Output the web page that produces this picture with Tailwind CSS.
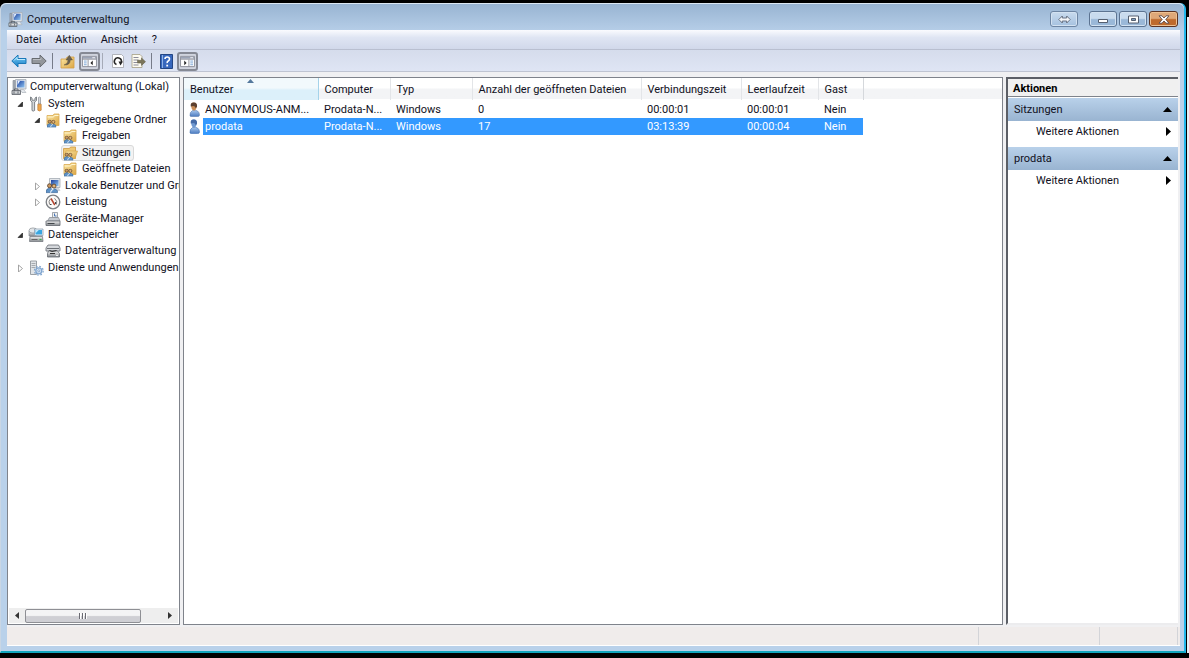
<!DOCTYPE html>
<html lang="de">
<head>
<meta charset="utf-8">
<title>Computerverwaltung</title>
<script src="https://cdn.jsdelivr.net/npm/@tailwindcss/browser@4"></script>
</head>
<body class="h-screen overflow-hidden bg-black font-[Roboto,'Noto_Sans',sans-serif] text-[11px] leading-4 text-[#111122]">

<!-- Shared icon symbols -->
<svg class="absolute size-0">
  <defs>
    <linearGradient id="gFolder" x1="0" y1="0" x2="1" y2="1"><stop offset="0" stop-color="#fbe7a4"/><stop offset="1" stop-color="#dca747"/></linearGradient>
    <linearGradient id="gScreen" x1="0" y1="0" x2="1" y2="1"><stop offset="0" stop-color="#1c3f9c"/><stop offset="1" stop-color="#8fc4f2"/></linearGradient>
    <linearGradient id="gMetal" x1="0" y1="0" x2="0" y2="1"><stop offset="0" stop-color="#f4f4f4"/><stop offset="1" stop-color="#85898e"/></linearGradient>
    <linearGradient id="gUser" x1="0" y1="0" x2="0" y2="1"><stop offset="0" stop-color="#a9c8ee"/><stop offset="1" stop-color="#4d7cc0"/></linearGradient>
    <linearGradient id="gBlue" x1="0" y1="0" x2="0" y2="1"><stop offset="0" stop-color="#7fd3f8"/><stop offset="1" stop-color="#1479c4"/></linearGradient>
    <symbol id="computer" viewBox="0 0 16 16">
      <path d="M4.500.5h10.500v9.500H4.500z" fill="#e3e7ed" stroke="#a4abb4" stroke-width=".8"/>
      <path d="M6 1.800h7.500v6.700H6z" fill="url(#gScreen)"/>
      <path d="M6.500 2h2.500L6.500 6z" fill="#e8f3ff"/>
      <path d="M2 1.500h2v9.500H2z" fill="#a9b0ba" stroke="#7c838c" stroke-width=".6"/>
      <path d="M9 10.500h3.500L15 13.500h-4z" fill="#e4e8ed" stroke="#a4abb4" stroke-width=".6"/>
      <path d="M1 11.500h8.500v4H1z" fill="#aeb3b9" stroke="#5c6168" stroke-width=".8"/>
      <path d="M3.500 11.500V10H7v1.500" fill="none" stroke="#4f545a" stroke-width=".8"/>
      <path d="M1.500 13.200h7.500" stroke="#f0f0f0" stroke-width=".8"/>
      <path d="M3 12.500v2M7 12.500v2" stroke="#4f545a" stroke-width=".8"/>
    </symbol>
    <symbol id="tools" viewBox="0 0 16 16">
      <path d="M2.500 1v3.500l1.500 1.500v8.500q1.200 1.200 2.600 0V6L8.500 4.500V1L7 2v2.200H4V2z" fill="#d4d7da" stroke="#73787e" stroke-width=".9"/>
      <path d="M10.500 1.500q1-1 2 0V8h-2z" fill="#d5d8dc" stroke="#7b8086" stroke-width=".6"/>
      <path d="M9.800 8.200h3.400v6q-1.700 1.600-3.400 0z" fill="#efa64c" stroke="#b0702a" stroke-width=".6"/>
    </symbol>
    <symbol id="people" viewBox="0 0 12 10">
      <circle cx="3.500" cy="2.500" r="2" fill="#c99a62" stroke="#573a25" stroke-width=".8"/>
      <circle cx="8" cy="2.800" r="2" fill="#e0b478" stroke="#573a25" stroke-width=".8"/>
      <path d="M0 9q0-4 3.500-4 2 0 2.700 1.200Q9 4.300 11.500 7.500V9.500H0z" fill="#5f93c8" stroke="#2d5380" stroke-width=".5"/>
      <path d="M4.500 9.500q.500-3 3-3.500" fill="none" stroke="#e3effa" stroke-width="1.100"/>
    </symbol>
    <symbol id="folder" viewBox="0 0 16 16">
      <path d="M2 3.500h6l1-1.500h5v11.500H2z" fill="url(#gFolder)" stroke="#d9aa50" stroke-width=".8"/>
      <path d="M2.500 5h6l1-1.500H13.500" stroke="#fff5ce" fill="none"/>
      <use href="#people" x="2" y="7.500" width="9.500" height="8.200"/>
    </symbol>
    <symbol id="folderOpen" viewBox="0 0 16 16">
      <path d="M1.500 3.500H7.500l1-1.500h5v11.500h-12z" fill="#efc873" stroke="#cf9a42" stroke-width=".8"/>
      <path d="M4 6h11.500L13 13.500H2z" fill="url(#gFolder)" stroke="#d9aa50" stroke-width=".7"/>
      <use href="#people" x="2" y="7.500" width="9.500" height="8.200"/>
    </symbol>
    <symbol id="localusers" viewBox="0 0 16 16">
      <path d="M4.500.5h10.500v9h-10.500z" fill="#e3e6ea" stroke="#a4abb4" stroke-width=".8"/>
      <path d="M6 2h7.500v6H6z" fill="url(#gScreen)"/>
      <path d="M10 10h4l1.500 3H10z" fill="#cfd4da"/>
      <use href="#people" x="1" y="5" width="12" height="10.500"/>
    </symbol>
    <symbol id="gauge" viewBox="0 0 16 16">
      <circle cx="8" cy="8" r="6.800" fill="#fcfaf8" stroke="#7b7f84" stroke-width="1.300"/>
      <path d="M4.500 10.500Q3.200 7 5.500 4.800M11.500 10.500Q12.800 7 9.500 4.300" stroke="#777" fill="none" stroke-width=".9"/>
      <path d="M6 4.500 9.800 11" stroke="#b5452f" stroke-width="1.500"/>
      <path d="M5 10.500h1.500M10.500 8v2" stroke="#444"/>
    </symbol>
    <symbol id="device" viewBox="0 0 16 16">
      <path d="M7.500 1.500h5v5h-5z" fill="#f0f0f0" stroke="#8c9299" stroke-width=".8"/>
      <path d="M4.500 6.500h9l1.500 3.500H2.500z" fill="#c6cad0" stroke="#858a91" stroke-width=".7"/>
      <path d="M1 10h14v4.500H1z" fill="url(#gMetal)" stroke="#63686e" stroke-width=".8"/>
      <path d="M2.500 12.500h7" stroke="#43474b"/><path d="M9.500 2.500v2.500h2" stroke="#4a78b8" fill="none"/>
    </symbol>
    <symbol id="storage" viewBox="0 0 16 16">
      <path d="M1 4v5h7V4z" fill="url(#gMetal)" stroke="#8b9096" stroke-width=".7"/>
      <ellipse cx="5" cy="3.500" rx="4" ry="2.600" fill="#e2e5e8" stroke="#8b9096" stroke-width=".7"/>
      <path d="M6.500 2h8.500v6.500H6.500z" fill="#eaf3fa" stroke="#8295a8" stroke-width=".7"/>
      <path d="M7.500 3h6.500v4.500H7.500z" fill="#39a6e0"/><path d="M7.800 3h3L7.800 6z" fill="#bfe8fb"/>
      <path d="M2 9.500h12.500l.5 5H1.500z" fill="url(#gMetal)" stroke="#767b81" stroke-width=".8"/>
      <path d="M3.500 12.500h6" stroke="#666"/><path d="M11.500 12.500h2" stroke="#32b24a" stroke-width="1.200"/>
    </symbol>
    <symbol id="disk" viewBox="0 0 16 16">
      <path d="M3 2h10.500L15 5v3H1V5z" fill="#d5d8dc" stroke="#74797f" stroke-width=".9"/>
      <path d="M2 5.500h12" stroke="#6c7177"/>
      <path d="M3.500 8h9l2 2.500V14h-12v-3.500z" fill="url(#gMetal)" stroke="#63686e" stroke-width=".8"/>
      <path d="M4.500 7.500 7 8.500l4.500-1M5 10.500h5" stroke="#333" fill="none"/><path d="M11 12.500h2" stroke="#eee"/>
    </symbol>
    <symbol id="services" viewBox="0 0 16 16">
      <path d="M2.500 1h6v13.500h-6z" fill="#e1e4e7" stroke="#92979d" stroke-width=".9"/>
      <path d="M3.500 3.500h4M3.500 5.500h4M3.500 7.500h4" stroke="#969ba1" stroke-width=".8"/>
      <circle cx="10.800" cy="10.800" r="3" fill="#d5e4f4" stroke="#82a6cf" stroke-width="1.300"/>
      <circle cx="10.800" cy="10.800" r="4.400" fill="none" stroke="#82a6cf" stroke-width="1.200" stroke-dasharray="1.700 1.750"/>
      <circle cx="10.800" cy="10.800" r="1" fill="#fff" stroke="#5b85b6" stroke-width=".6"/>
    </symbol>
    <symbol id="expanded" viewBox="0 0 8 8"><path d="M6.500 2v4.500H2z" fill="#333" stroke="#111" stroke-width=".6"/></symbol>
    <symbol id="collapsed" viewBox="0 0 8 8"><path d="M2.500 1 6.500 4.500 2.500 8z" fill="#fff" stroke="#9b9b9b" stroke-width=".9"/></symbol>
    <symbol id="panel" viewBox="0 0 16 14">
      <path d="M.5 1.500h15v11H.5z" fill="#fff" stroke="#8a8e98"/><path d="M1 2h14v2H1z" fill="#9aa3b5"/>
      <path d="M11 3h3" stroke="#fff"/><path d="M.5 4.500h15" stroke="#8a8e98"/>
    </symbol>
  </defs>
</svg>

<div class="flex h-full pb-[5px] pt-[3px]">
<main class="flex min-w-0 flex-1 flex-col rounded-t-md border-b-2 border-l border-r-2 border-b-[#12a5bd] border-l-[#c9d6e4] border-r-[#22b6ea] bg-[#b9d1ea] pl-[6px] pr-[4px]">

  <!-- Title bar -->
  <header class="-ml-[6px] -mr-[4px] flex h-[27px] shrink-0 items-center rounded-t-md border-t border-[#dbe7f3] bg-linear-to-b from-[#98b4d2] to-[#b5cde7] pl-[7px] pr-[6px]">
    <svg class="mt-1 size-[15px]"><use href="#computer"/></svg>
    <h1 class="ml-1 mt-[6px] flex-1">Computerverwaltung</h1>
    <div class="mt-1 flex">
      <button aria-label="Verschieben" class="mr-[11px] flex h-4 w-7 items-center justify-center rounded-[3px] border border-[#6d85a3] bg-linear-to-b from-[#c9dbee] to-[#a5c1df] shadow-[inset_0_0_0_1px_#d3e2f1]">
        <svg class="h-[9px] w-[13px]" viewBox="0 0 13 9"><path d="M.8 4.500 4.300 1v2h4.400V1l3.500 3.500L8.700 8V6H4.300v2z" fill="#f4f6f9" stroke="#5e6878" stroke-width=".9"/></svg>
      </button>
      <button aria-label="Minimieren" class="mr-[2px] flex h-4 w-7 items-center justify-center rounded-[3px] border border-[#5c7391] bg-linear-to-b from-[#c9dbee] from-45% to-[#9ab8d8] to-55% shadow-[inset_0_0_0_1px_#d3e2f1]">
        <svg class="h-[9px] w-[12px]" viewBox="0 0 12 9"><path d="M1.500 4.500h9v3h-9z" fill="#fff" stroke="#545f70"/></svg>
      </button>
      <button aria-label="Maximieren" class="mr-[2px] flex h-4 w-7 items-center justify-center rounded-[3px] border border-[#5c7391] bg-linear-to-b from-[#c9dbee] from-45% to-[#9ab8d8] to-55% shadow-[inset_0_0_0_1px_#d3e2f1]">
        <svg class="h-[9px] w-[11px]" viewBox="0 0 11 9"><path d="M.5 1h10v7H.5z" fill="#fff" stroke="#545f70"/><path d="M3.500 3.500h4v2h-4z" fill="#7f9fc2" stroke="#545f70"/></svg>
      </button>
      <button aria-label="Schließen" class="flex h-4 w-[29px] items-center justify-center rounded-[3px] border border-[#5b3323] bg-linear-to-b from-[#dfa878] from-45% to-[#be6a2c] to-55% shadow-[inset_0_0_0_1px_#edc193]">
        <svg class="h-[9px] w-[12px]" viewBox="0 0 12 9"><path d="M1 .8h3L6 3l2-2.200h3L7.800 4.500 11 8.200H8L6 6 4 8.200H1l3.200-3.700z" fill="#fff" stroke="#5b4a4a" stroke-width=".9"/></svg>
      </button>
    </div>
  </header>

  <!-- Menu -->
  <nav class="flex h-[20px] shrink-0 items-center gap-[14px] border-b border-[#b9bfd0] bg-linear-to-b from-[#fafbfe] via-[#dfe5f3] via-40% to-[#d1d8ea] pl-[9px] pt-px">
    <button>Datei</button><button>Aktion</button><button>Ansicht</button><button>?</button>
  </nav>

  <!-- Toolbar -->
  <div role="toolbar" aria-label="Werkzeuge" class="flex h-[22px] shrink-0 items-center border-b border-[#bfc4d2] bg-linear-to-b from-[#d5dcec] to-[#dfe5f4] pl-1 pt-px">
    <button aria-label="Zurück"><svg class="h-[14px] w-4" viewBox="0 0 16 14"><path d="M.8 7 7 1v3.500h8v5H7V13z" fill="url(#gBlue)" stroke="#1b78b8"/><path d="M3 6.500 6 3.500v2h8" fill="none" stroke="#bdeaff"/></svg></button>
    <button aria-label="Vorwärts" class="ml-1"><svg class="h-[14px] w-4" viewBox="0 0 16 14"><path d="M15.200 7 9 1v3.500H1v5h8V13z" fill="#93979c" stroke="#676b70"/><path d="M2 5.500h8v-2" fill="none" stroke="#babdc2"/></svg></button>
    <span class="mx-[5px] h-4 w-px bg-[#767b88]"></span>
    <button aria-label="Eine Ebene nach oben" class="ml-[2px]"><svg class="size-[15px]" viewBox="0 0 15 15"><path d="M1 5h5l1-2h7v11H1z" fill="url(#gFolder)" stroke="#d5a045" stroke-width=".8"/><path d="M4 11q4-1 4-5H6L9.300 1.200 12.500 6h-2.200q0 5.500-6.300 5z" fill="#6a6152" stroke="#4d463a" stroke-width=".4"/></svg></button>
    <button aria-label="Konsolenstruktur anzeigen" class="ml-[4px] flex h-[19px] w-[21px] items-center justify-center rounded-[3px] border-2 border-[#858994] bg-[#d0d4de]"><svg class="h-[13px] w-[15px]" viewBox="0 0 16 14"><use href="#panel"/><path d="M6.500 5v7.500" stroke="#8a8e98"/><path d="M2 6.500h3M2 8.500h3M2 10.500h3" stroke="#76a2d5"/><path d="M11.500 6v5L9 8.500z" fill="#222"/></svg></button>
    <span class="mx-[2px] h-4 w-px bg-[#a6abb8]"></span>
    <button aria-label="Aktualisieren" class="ml-[6px]"><svg class="size-[14px]" viewBox="0 0 14 14"><path d="M1.500.5h9l2 2v11h-11z" fill="#fff" stroke="#a2a5ab" stroke-width=".8"/><path d="M5.500 10.500A3.500 3.500 0 1 1 10.300 8" fill="none" stroke="#262626" stroke-width="1.600"/><path d="M7.500 7.500h4.500L9.500 11.500z" fill="#262626"/></svg></button>
    <button aria-label="Liste exportieren" class="ml-[6px]"><svg class="h-[14px] w-[15px]" viewBox="0 0 15 14"><path d="M1 .5h8l2 2v11H1z" fill="#fdfbf0" stroke="#a59e84" stroke-width=".8"/><path d="M2.500 3.500h5M2.500 6h5M2.500 8.500h4M2.500 11h5" stroke="#8b8b9a"/><path d="M6.500 6.300h4V4l4 3.700-4 3.700V9.100h-4z" fill="#7b755a" stroke="#5b563f" stroke-width=".5"/></svg></button>
    <span class="mx-[5px] h-4 w-px bg-[#767b88]"></span>
    <button aria-label="Hilfe" class="ml-[3px]"><svg class="h-[15px] w-[13px]" viewBox="0 0 13 15"><path d="M.5.500h12v14H.5z" fill="#3767bd" stroke="#234684"/><path d="M2.500 1v13" stroke="#8fb3e6"/><path d="M5 5q0-2 2.200-2t2.300 2q0 1.200-1.300 2t-1 2.200" fill="none" stroke="#fff" stroke-width="1.600"/><path d="M6.300 10.700h1.800v1.800H6.300z" fill="#fff"/></svg></button>
    <button aria-label="Aktionsbereich anzeigen" class="ml-1 flex h-[19px] w-[21px] items-center justify-center rounded-[3px] border-2 border-[#858994] bg-[#d0d4de]"><svg class="h-[13px] w-[15px]" viewBox="0 0 16 14"><use href="#panel"/><path d="M9.500 5v7.500" stroke="#8a8e98"/><path d="M11 6.500h3M11 8.500h3M11 10.500h3" stroke="#76a2d5"/><path d="M4.500 6v5L7 8.500z" fill="#222"/></svg></button>
  </div>

  <!-- Panes -->
  <div class="flex min-h-0 flex-1 gap-[3px] bg-[#f0f0f2] pb-[2px] pt-[5px]">

    <aside class="flex w-[173px] shrink-0 flex-col border border-[#7f838b] bg-white">
      <ul class="mt-px grid h-[197px] auto-rows-fr overflow-hidden whitespace-nowrap">
        <li class="flex items-center pl-[3px]"><svg class="size-4"><use href="#computer"/></svg><span class="ml-[3px]">Computerverwaltung (Lokal)</span></li>
        <li class="flex items-center pl-2"><svg class="mr-1 size-2"><use href="#expanded"/></svg><svg class="size-4"><use href="#tools"/></svg><span class="ml-[4px]">System</span></li>
        <li class="flex items-center pl-[25px]"><svg class="mr-1 size-2"><use href="#expanded"/></svg><svg class="size-4"><use href="#folder"/></svg><span class="ml-[4px]">Freigegebene Ordner</span></li>
        <li class="flex items-center pl-[54px]"><svg class="size-4"><use href="#folder"/></svg><span class="ml-[4px]">Freigaben</span></li>
        <li class="flex items-center pl-[53px]"><span class="flex h-full items-center rounded-[3px] border border-[#d9d9d9] bg-[#f3f3f3] pr-[2px]"><svg class="size-4"><use href="#folderOpen"/></svg><span class="ml-[4px]">Sitzungen</span></span></li>
        <li class="flex items-center pl-[54px]"><svg class="size-4"><use href="#folder"/></svg><span class="ml-[4px]">Geöffnete Dateien</span></li>
        <li class="flex items-center pl-[25px]"><svg class="mr-1 size-2 shrink-0"><use href="#collapsed"/></svg><svg class="size-4 shrink-0"><use href="#localusers"/></svg><span class="ml-[4px]">Lokale Benutzer und Gruppen</span></li>
        <li class="flex items-center pl-[25px]"><svg class="mr-1 size-2"><use href="#collapsed"/></svg><svg class="size-4"><use href="#gauge"/></svg><span class="ml-[4px]">Leistung</span></li>
        <li class="flex items-center pl-[37px]"><svg class="size-4"><use href="#device"/></svg><span class="ml-[4px]">Geräte-Manager</span></li>
        <li class="flex items-center pl-2"><svg class="mr-1 size-2"><use href="#expanded"/></svg><svg class="size-4"><use href="#storage"/></svg><span class="ml-[4px]">Datenspeicher</span></li>
        <li class="flex items-center pl-[37px]"><svg class="size-4 shrink-0"><use href="#disk"/></svg><span class="ml-[4px]">Datenträgerverwaltung</span></li>
        <li class="flex items-center pl-2"><svg class="mr-1 size-2 shrink-0"><use href="#collapsed"/></svg><svg class="size-4 shrink-0"><use href="#services"/></svg><span class="ml-[4px]">Dienste und Anwendungen</span></li>
      </ul>
      <div class="mx-px mb-px mt-auto flex h-[15px] items-center bg-[#eeeeee]">
        <button aria-label="Nach links" class="flex w-4 justify-center"><svg class="h-[7px] w-1" viewBox="0 0 4 7"><path d="M4 0v7L0 3.500z" fill="#333"/></svg></button>
        <div class="flex h-[14px] w-[116px] items-center justify-center gap-px rounded-[2px] border border-[#8e8f94] bg-linear-to-b from-[#f4f4f5] from-45% to-[#cfcfd4] to-55%">
          <i class="h-[6px] w-[2px] border-r border-white bg-[#6a6a72]"></i><i class="h-[6px] w-[2px] border-r border-white bg-[#6a6a72]"></i><i class="h-[6px] w-[2px] border-r border-white bg-[#6a6a72]"></i>
        </div>
        <button aria-label="Nach rechts" class="ml-auto flex w-4 justify-center"><svg class="h-[7px] w-1" viewBox="0 0 4 7"><path d="M0 0v7l4-3.500z" fill="#333"/></svg></button>
      </div>
    </aside>

    <section class="min-w-0 flex-1 border border-[#7f838b] bg-white">
      <div class="bg-linear-to-b from-white from-45% to-[#f3f4f6] to-55% bg-[length:100%_21px] bg-no-repeat">
      <table class="w-[679px] table-fixed border-collapse whitespace-nowrap text-left">
        <colgroup><col class="w-[134px]"><col class="w-[72px]"><col class="w-[82px]"><col class="w-[169px]"><col class="w-[100px]"><col class="w-[77px]"><col class="w-[45px]"></colgroup>
        <thead>
          <tr class="h-[22px]">
            <th class="relative border-r border-[#a5d3ea] bg-linear-to-b from-[#f2f9fc] from-45% to-[#dcf0fa] to-55% p-0 pl-[6px] pt-[2px] font-normal">Benutzer<svg class="absolute left-[63px] top-[1px] h-1 w-[7px]" viewBox="0 0 7 4"><path d="M0 4 3.500 0 7 4z" fill="#54789c"/></svg></th>
            <th class="border-r border-[#e3e5e8] p-0 pl-[6px] pt-[2px] font-normal">Computer</th>
            <th class="border-r border-[#e3e5e8] p-0 pl-[6px] pt-[2px] font-normal">Typ</th>
            <th class="border-r border-[#e3e5e8] p-0 pl-[6px] pt-[2px] font-normal">Anzahl der geöffneten Dateien</th>
            <th class="border-r border-[#e3e5e8] p-0 pl-[6px] pt-[2px] font-normal">Verbindungszeit</th>
            <th class="border-r border-[#e3e5e8] p-0 pl-[6px] pt-[2px] font-normal">Leerlaufzeit</th>
            <th class="border-r border-[#d5d8dc] p-0 pl-[6px] pt-[2px] font-normal">Gast</th>
          </tr>
        </thead>
        <tbody>
          <tr class="h-[18px]">
            <td class="p-0"><div class="flex items-center"><svg class="mx-[5px] h-[15px] w-[11px] shrink-0" viewBox="0 0 11 15"><path d="M1 14q-.500-4 2.500-5.500 3-.8 5 .5 2 1.500 2 4 0 1.500-2 1.500h-5.500q-1.500 0-2-.5z" fill="url(#gUser)" stroke="#5a7db0" stroke-width=".6"/><path d="M2 2Q4-.3 7 1.200 8.500 3 7.500 6 6.500 9 4.500 8.500 2 7.500 2 2z" fill="#c98d56"/><path d="M1.800 4.500Q1 .3 5 .5q3.500.2 3 4.500L6.500 6Q6 2.800 1.800 4.500z" fill="#5c4030"/></svg><span class="min-w-0 flex-1 pt-[2px]">ANONYMOUS-ANM...</span></div></td>
            <td class="p-0 pl-[6px] pt-[2px]">Prodata-N...</td><td class="p-0 pl-[6px] pt-[2px]">Windows</td><td class="p-0 pl-[6px] pt-[2px]">0</td><td class="p-0 pl-[6px] pt-[2px]">00:00:01</td><td class="p-0 pl-[6px] pt-[2px]">00:00:01</td><td class="p-0 pl-[6px] pt-[2px]">Nein</td>
          </tr>
          <tr class="h-[17px] text-white">
            <td class="p-0"><div class="flex h-[17px] items-center"><svg class="ml-[5px] mr-[3px] h-[15px] w-[11px] shrink-0" viewBox="0 0 11 15"><path d="M1 14q-.500-4 2.500-5.500 3-.8 5 .5 2 1.500 2 4 0 1.500-2 1.500h-5.500q-1.500 0-2-.5z" fill="url(#gUser)" stroke="#3e6fb3" stroke-width=".6"/><path d="M2 2Q4-.3 7 1.200 8.500 3 7.500 6 6.500 9 4.500 8.500 2 7.500 2 2z" fill="#6f98d0"/><path d="M1.800 4.500Q1 .3 5 .5q3.500.2 3 4.500L6.500 6Q6 2.800 1.800 4.500z" fill="#456aa6"/></svg><span class="h-full min-w-0 flex-1 bg-[#3399ff] pl-[2px] pt-px">prodata</span></div></td>
            <td class="bg-[#3399ff] p-0 pl-[6px] pt-px">Prodata-N...</td><td class="bg-[#3399ff] p-0 pl-[6px] pt-px">Windows</td><td class="bg-[#3399ff] p-0 pl-[6px] pt-px">17</td><td class="bg-[#3399ff] p-0 pl-[6px] pt-px">03:13:39</td><td class="bg-[#3399ff] p-0 pl-[6px] pt-px">00:00:04</td><td class="bg-[#3399ff] p-0 pl-[6px] pt-px">Nein</td>
          </tr>
        </tbody>
      </table>
      </div>
    </section>

    <aside class="mr-[2px] flex w-[172px] shrink-0 flex-col border-b-2 border-l-2 border-t-2 border-b-[#ececee] border-l-[#5c5f66] border-t-[#5c5f66] bg-white">
      <h2 class="h-[18px] border-b border-[#7f838b] bg-[#f0f0f0] pl-[5px] pt-[2px] font-bold text-black">Aktionen</h2>
      <button class="mt-px flex h-[23px] items-center justify-between bg-linear-to-b from-[#b9d1ea] to-[#99b4d1] pl-[6px] pr-[6px]">Sitzungen<svg class="h-[5px] w-[9px]" viewBox="0 0 9 5"><path d="M0 5 4.500 0 9 5z"/></svg></button>
      <button class="mb-[5px] flex h-[21px] items-center justify-between pl-[28px] pr-[7px]">Weitere Aktionen<svg class="h-[9px] w-[5px]" viewBox="0 0 5 9"><path d="M0 0v9l5-4.500z"/></svg></button>
      <button class="flex h-[23px] items-center justify-between bg-linear-to-b from-[#b9d1ea] to-[#99b4d1] pl-[6px] pr-[6px]">prodata<svg class="h-[5px] w-[9px]" viewBox="0 0 9 5"><path d="M0 5 4.500 0 9 5z"/></svg></button>
      <button class="flex h-[21px] items-center justify-between pl-[28px] pr-[7px]">Weitere Aktionen<svg class="h-[9px] w-[5px]" viewBox="0 0 5 9"><path d="M0 0v9l5-4.500z"/></svg></button>
    </aside>
  </div>

  <!-- Status bar -->
  <footer class="mb-[5px] flex h-[19px] shrink-0 justify-end border-b border-white bg-[#f0eceb] pr-[2px]">
    <div class="w-[121px] border-l border-[#d3d4d8]"></div><div class="w-[79px] border-x border-[#d3d4d8]"></div>
  </footer>
</main>
<div class="mt-[14px] w-[3px] border-l border-black bg-[#e8eef6]"></div>
</div>
</body>
</html>
